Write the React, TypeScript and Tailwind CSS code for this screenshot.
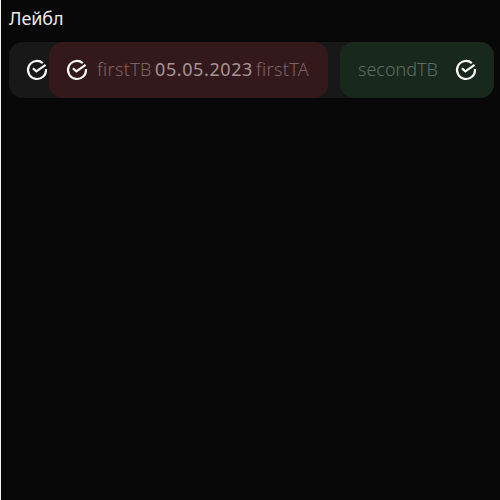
function CheckIcon() {
  return (
    <svg className="block size-6 shrink-0" viewBox="0 0 24 24" fill="none" stroke="#fafafa" strokeWidth="2.2">
      <path d="M17.8 5.1A9 9 0 1 0 20.95 11" />
      <path d="M7.9 10.2L11.3 13.3L20.6 6.8" />
    </svg>
  );
}

export default function App() {
  return (
    <div className="h-[500px] w-[500px] overflow-hidden border-l border-[#f0f0f0] bg-[#080808] pl-2 font-['Noto_Sans',sans-serif] text-[18px] leading-[22px] whitespace-pre text-[#ececec]">
      <div className="mt-[7px] h-[35px]">
        <span className="tracking-[-0.1px]">Лейбл</span>
      </div>
      <div className="flex h-14 w-[485px] rounded-[14px] bg-[#181818]">
        <div className="flex w-10 items-center pl-4">
          <CheckIcon />
        </div>
        <div className="flex w-[279px] items-center rounded-[14px] bg-[#34191c] pl-4">
          <CheckIcon />
          <span className="mb-0.5 ml-2 w-[58px] font-light tracking-[0.35px] text-[#7a6467]">firstTB</span>
          <span className="mb-0.5 w-[101px] tracking-[0.6px] text-[#a39697]">05.05.2023</span>
          <span className="mb-0.5 font-light tracking-[0.35px] text-[#7a6467]">firstTA</span>
        </div>
        <div className="ml-3 flex w-[154px] items-center rounded-[14px] bg-[#19281c] pl-[18px]">
          <span className="mb-0.5 w-24 font-light tracking-[-0.02px] text-[#5f6c62]">secondTB</span>
          <CheckIcon />
        </div>
      </div>
    </div>
  );
}
